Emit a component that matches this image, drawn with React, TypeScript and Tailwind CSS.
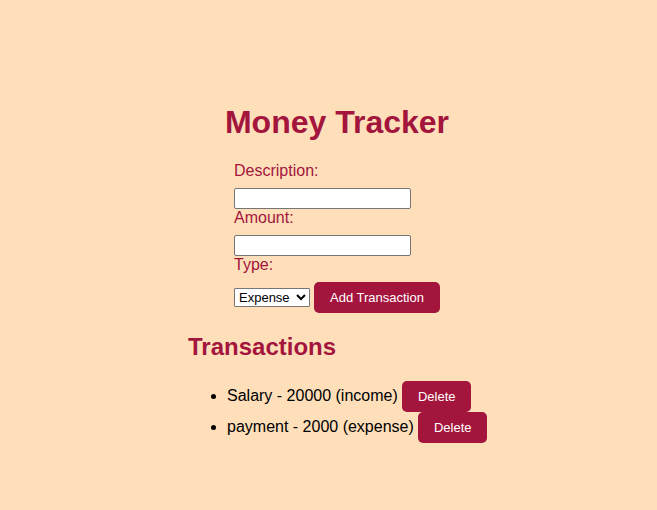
import { useState } from "react";

type Transaction = { id: number; description: string; amount: number; type: string };

const buttonClass =
  "h-[31px] shrink-0 rounded-[5px] bg-[#a3153d] text-[13px] leading-[15px] font-medium whitespace-nowrap text-white";
const inputClass =
  "h-[21px] w-[177px] rounded-[2px] border border-[#767676] bg-white px-1 text-[13px]";
const labelClass = "text-base leading-[18px] text-[#a3153d]";

export default function App() {
  const [items, setItems] = useState<Transaction[]>([
    { id: 1, description: "Salary", amount: 20000, type: "income" },
    { id: 2, description: "payment", amount: 2000, type: "expense" },
  ]);
  const [description, setDescription] = useState("");
  const [amount, setAmount] = useState("");
  const [type, setType] = useState("expense");

  const add = (e: React.FormEvent) => {
    e.preventDefault();
    setItems([...items, { id: Date.now(), description, amount: Number(amount), type }]);
    setDescription("");
    setAmount("");
  };

  return (
    <main className="flex min-h-screen flex-col items-center bg-[#ffdfba] pt-[104px] pl-[17px] font-['Liberation_Sans',Arial,sans-serif] text-black">
      <div className="flex flex-col items-center">
        <h1 className="text-[32px] leading-[37px] font-bold text-[#a3153d]">Money Tracker</h1>
        <form onSubmit={add} className="mt-[21px] flex w-[206px] flex-col items-start">
          <label htmlFor="description" className={labelClass}>Description:</label>
          <input id="description" value={description} onChange={(e) => setDescription(e.target.value)} className={`${inputClass} mt-2`} />
          <label htmlFor="amount" className={labelClass}>Amount:</label>
          <input id="amount" value={amount} onChange={(e) => setAmount(e.target.value)} className={`${inputClass} mt-2`} />
          <label htmlFor="type" className={labelClass}>Type:</label>
          <div className="mt-2 flex items-center gap-1">
            <select id="type" value={type} onChange={(e) => setType(e.target.value)} className="h-[19px] w-[76px] shrink-0 rounded-[1px] border border-[#767676] bg-white text-[13px]">
              <option value="expense">Expense</option>
              <option value="income">Income</option>
            </select>
            <button type="submit" className={`${buttonClass} w-[126px]`}>Add Transaction</button>
          </div>
        </form>
        <section className="mt-5 w-[298px]">
          <h2 className="text-2xl leading-[27px] font-bold text-[#a3153d]">Transactions</h2>
          <ul className="mt-5 list-disc pl-[39px]">
            {items.map((t) => (
              <li key={t.id} className="h-[31px] whitespace-nowrap leading-[31px]">
                {t.description} - {t.amount} ({t.type}){" "}
                <button type="button" onClick={() => setItems(items.filter((i) => i.id !== t.id))} className={`${buttonClass} w-[69px]`}>Delete</button>
              </li>
            ))}
          </ul>
        </section>
      </div>
    </main>
  );
}
